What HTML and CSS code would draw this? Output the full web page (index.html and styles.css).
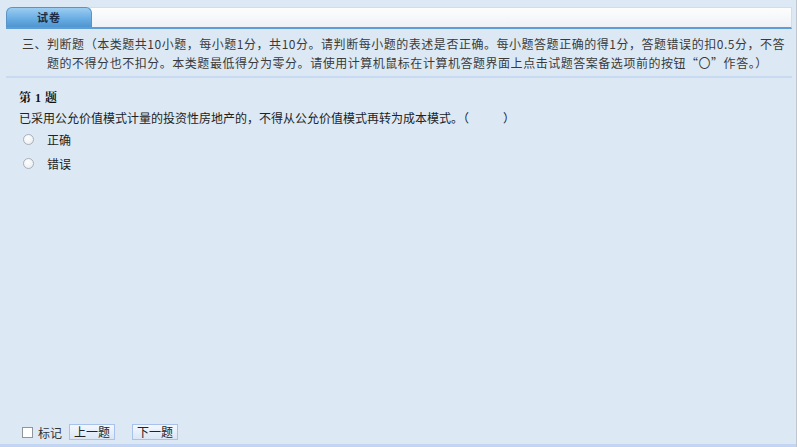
FILE: index.html
```html
<!DOCTYPE html>
<html lang="zh-CN">
<head>
<meta charset="utf-8">
<title>试卷</title>
<link rel="stylesheet" href="styles.css">
</head>
<body>
<div class="frame">
  <div class="tabbar">
    <div class="tab">试卷</div>
  </div>
  <div class="intro">三、判断题（本类题共10小题，每小题1分，共10分。请判断每小题的表述是否正确。每小题答题正确的得1分，答题错误的扣0.5分，不答题的不得分也不扣分。本类题最低得分为零分。请使用计算机鼠标在计算机答题界面上点击试题答案备选项前的按钮“〇”作答。）</div>
  <div class="sep"></div>
  <div class="main">
    <div class="qtitle">第 <span class="qnum">1</span> 题</div>
    <div class="qtext">已采用公允价值模式计量的投资性房地产的，不得从公允价值模式再转为成本模式。（<span class="blank"></span>）</div>
    <div class="opt"><span class="radio"></span><span class="otext">正确</span></div>
    <div class="opt"><span class="radio"></span><span class="otext">错误</span></div>
  </div>
  <div class="footer">
    <span class="check"></span><span class="mark">标记</span>
    <span class="btn">上一题</span>
    <span class="btn">下一题</span>
  </div>
  <div class="band"></div>
</div>
</body>
</html>
```

FILE: styles.css
```css
html, body {
  margin: 0;
  padding: 0;
}
body {
  width: 797px;
  height: 447px;
  overflow: hidden;
  background: #dce9f5;
  font-family: "Noto Sans CJK SC", "Noto Sans", sans-serif;
  font-size: 12px;
  color: #222;
}
.frame {
  height: 447px;
  box-sizing: border-box;
  display: flex;
  flex-direction: column;
  border-right: 1px solid #bfc6cf;
  width: 797px;
}
.tabbar {
  margin: 7px 4px 0 6px;
  height: 19px;
  display: flex;
  background: linear-gradient(#fdfdfd, #eef2f6);
  border-top: 1px solid #d3dde8;
  border-right: 1px solid #d3dde8;
  border-bottom: 2px solid #5e9dd6;
  border-radius: 6px 0 0 0;
}
.tab {
  width: 86px;
  margin-top: -1px;
  height: 20px;
  box-sizing: border-box;
  border: 1px solid #5a93c6;
  border-bottom: none;
  border-radius: 6px 6px 0 0;
  background: linear-gradient(#9ccdf1, #6aaee3 55%, #4f95d0);
  text-align: center;
  font-weight: bold;
  font-size: 11px;
  line-height: 19px;
  color: #1c2c44;
  letter-spacing: 1px;
}
.intro {
  margin: 5px 5px 0 47px;
  text-indent: -25px;
  line-height: 19px;
  color: #3a3a3a;
  letter-spacing: 0.53px;
  font-size: 12px;
}
.sep {
  margin: 4px 4px 0 6px;
  height: 2px;
  background: #c8daf1;
}
.main {
  flex: 1;
  padding: 9px 0 0 19px;
}
.qtitle {
  font-weight: bold;
  line-height: 19px;
  color: #111;
  font-family: "Noto Serif CJK SC", "Noto Sans CJK SC", serif;
}
.qnum {
  font-family: "Liberation Serif", serif;
  margin: 0 1px;
}
.qtext {
  line-height: 19px;
  color: #222;
}
.blank {
  display: inline-block;
  width: 34px;
}
.opt {
  height: 24px;
  display: flex;
  align-items: center;
  padding-left: 4px;
}
.radio {
  width: 11px;
  height: 11px;
  box-sizing: border-box;
  border: 1px solid #a9b0b8;
  border-radius: 50%;
  background: radial-gradient(circle at 40% 35%, #ffffff, #e6eaef);
}
.otext {
  margin-left: 13px;
  color: #222;
}
.footer {
  height: 20px;
  display: flex;
  align-items: center;
  padding-left: 22px;
  margin-bottom: 2px;
}
.check {
  width: 11px;
  height: 11px;
  box-sizing: border-box;
  border: 1px solid #8e959c;
  background: #fff;
}
.mark {
  margin-left: 5px;
  color: #333;
}
.btn {
  margin-left: 7px;
  width: 46px;
  height: 16px;
  box-sizing: border-box;
  border: 1px solid #a8c2ec;
  background: linear-gradient(#f4f8fd, #d9e6f6);
  text-align: center;
  line-height: 14px;
  color: #222;
  font-size: 12px;
}
.btn + .btn {
  margin-left: 17px;
}
.band {
  height: 3px;
  background: #c2d5f2;
}
```
